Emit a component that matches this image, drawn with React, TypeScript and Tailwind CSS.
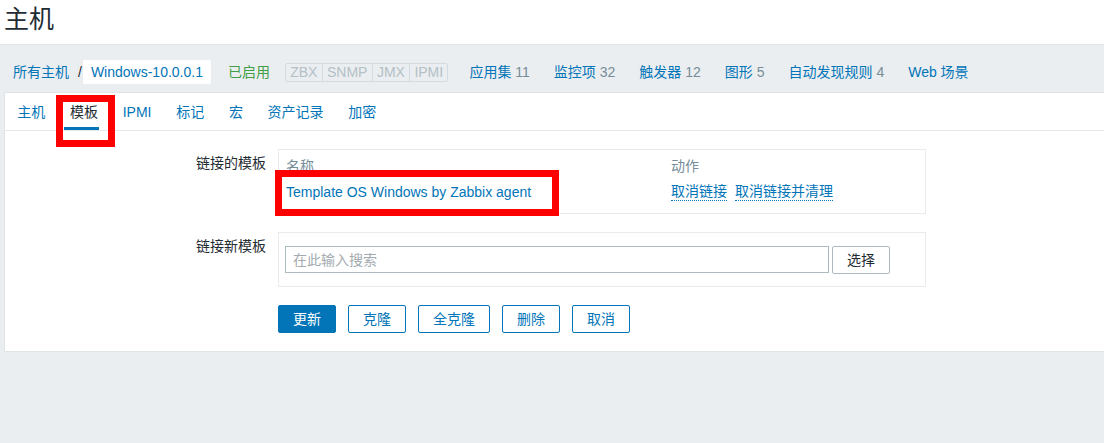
import React from "react";

const LINK = "text-[#0275b8]";

function Tabs() {
  const tabs = ["主机", "模板", "IPMI", "标记", "宏", "资产记录", "加密"];
  return (
    <div className="flex border-b border-[#e4e8eb]">
      {tabs.map((t) => {
        const active = t === "模板";
        return (
          <div key={t} className="flex flex-col px-[12.35px]">
            <span className={`mt-[10px] leading-[18px] ${active ? "text-[#1f2c33]" : LINK}`}>{t}</span>
            <div className={`mt-[6px] h-[3px] ml-[-6px] mr-[-1px] ${active ? "bg-[#0275b8]" : ""}`} />
          </div>
        );
      })}
    </div>
  );
}

function NavCount({ label, count }: { label: string; count?: string }) {
  return (
    <span className="whitespace-nowrap">
      <span className={LINK}>{label}</span>
      {count && <span className="text-[#768d99]"> {count}</span>}
    </span>
  );
}

const OUTLINE_BTN =
  "h-[28px] px-[14px] rounded-[2px] bg-white border border-[#0275b8] text-[#0275b8] leading-[18px]";

export default function App() {
  return (
    <div className="relative w-[1104px] h-[443px] overflow-hidden bg-[#ebeef0] text-[14px] text-[#1f2c33] font-['Liberation_Sans','Noto_Sans_CJK_SC',sans-serif]">
      {/* Header */}
      <div className="h-[45px] bg-white border-b border-[#dfe4e7] pl-[4px] pt-[4px]">
        <h1 className="text-[25px] leading-[30px] text-[#1f2c33]">主机</h1>
      </div>

      {/* Breadcrumb / host nav */}
      <div className="mt-[15px] h-[24px] flex items-center pl-[13px] leading-[18px]">
        <span className={LINK}>所有主机</span>
        <span className="ml-[9px] text-[#1f2c33]">/</span>
        <span className={`ml-[1px] h-[24px] flex items-center px-[8px] bg-white rounded-[2px] ${LINK}`}>Windows-10.0.0.1</span>
        <span className="ml-[17px] text-[#429e47]">已启用</span>
        <div className="ml-[15px] flex h-[19px] border border-[#d3dbe0] rounded-[2px] text-[#b3c0c7] leading-[17px] divide-x divide-[#d3dbe0]">
          <span className="px-[4.25px]">ZBX</span>
          <span className="px-[4.25px]">SNMP</span>
          <span className="px-[4.25px]">JMX</span>
          <span className="px-[4.25px]">IPMI</span>
        </div>
        <div className="ml-[21px] flex gap-[24px]">
          <NavCount label="应用集" count="11" />
          <NavCount label="监控项" count="32" />
          <NavCount label="触发器" count="12" />
          <NavCount label="图形" count="5" />
          <NavCount label="自动发现规则" count="4" />
          <NavCount label="Web 场景" />
        </div>
      </div>

      {/* Main panel */}
      <div className="mt-[8px] ml-[4px] w-[1110px] bg-white border border-[#dfe4e7] pb-[18px]">
        <Tabs />

        <div className="pt-[18px]">
          {/* Linked templates */}
          <div className="flex">
            <div className="w-[261px] text-right pt-[5px] leading-[18px]">链接的模板</div>
            <div className="ml-[12px] w-[648px] border border-[#e8ecee] pt-[7px] pb-[12px] px-[7px] leading-[18px]">
              <div className="flex text-[#768d99]">
                <span className="w-[385px]">名称</span>
                <span>动作</span>
              </div>
              <div className="flex mt-[8px]">
                <span className={`w-[385px] ${LINK}`}>Template OS Windows by Zabbix agent</span>
                <span className="flex gap-[8px]">
                  <span className={`${LINK} border-b border-dotted border-[#0275b8] leading-[17px] h-[18px]`}>取消链接</span>
                  <span className={`${LINK} border-b border-dotted border-[#0275b8] leading-[17px] h-[18px]`}>取消链接并清理</span>
                </span>
              </div>
            </div>
          </div>

          {/* Link new templates */}
          <div className="flex mt-[18px]">
            <div className="w-[261px] text-right pt-[5px] leading-[18px]">链接新模板</div>
            <div className="ml-[12px] w-[648px] border border-[#e8ecee] pt-[13px] pb-[12px] px-[6px] flex items-start">
              <input
                className="w-[544px] h-[27px] border border-[#acbbc2] px-[7px] text-[14px] outline-none placeholder:text-[#a3abb0]"
                placeholder="在此输入搜索"
              />
              <button className="ml-[3px] w-[58px] h-[28px] border border-[#acbbc2] rounded-[2px] bg-white text-[#1f2c33] leading-[18px]">
                选择
              </button>
            </div>
          </div>

          {/* Buttons */}
          <div className="mt-[18px] ml-[273px] flex gap-[12px]">
            <button className="h-[28px] px-[14px] rounded-[2px] bg-[#0275b8] border border-[#0275b8] text-white leading-[18px]">更新</button>
            <button className={OUTLINE_BTN}>克隆</button>
            <button className={OUTLINE_BTN}>全克隆</button>
            <button className={OUTLINE_BTN}>删除</button>
            <button className={OUTLINE_BTN}>取消</button>
          </div>
        </div>
      </div>

      {/* Red annotation boxes */}
      <div className="absolute left-[56px] top-[95px] w-[59px] h-[52px] border-[7px] border-[#ff0000]" />
      <div className="absolute left-[275px] top-[170px] w-[284px] h-[46px] border-[7px] border-[#ff0000]" />
    </div>
  );
}
